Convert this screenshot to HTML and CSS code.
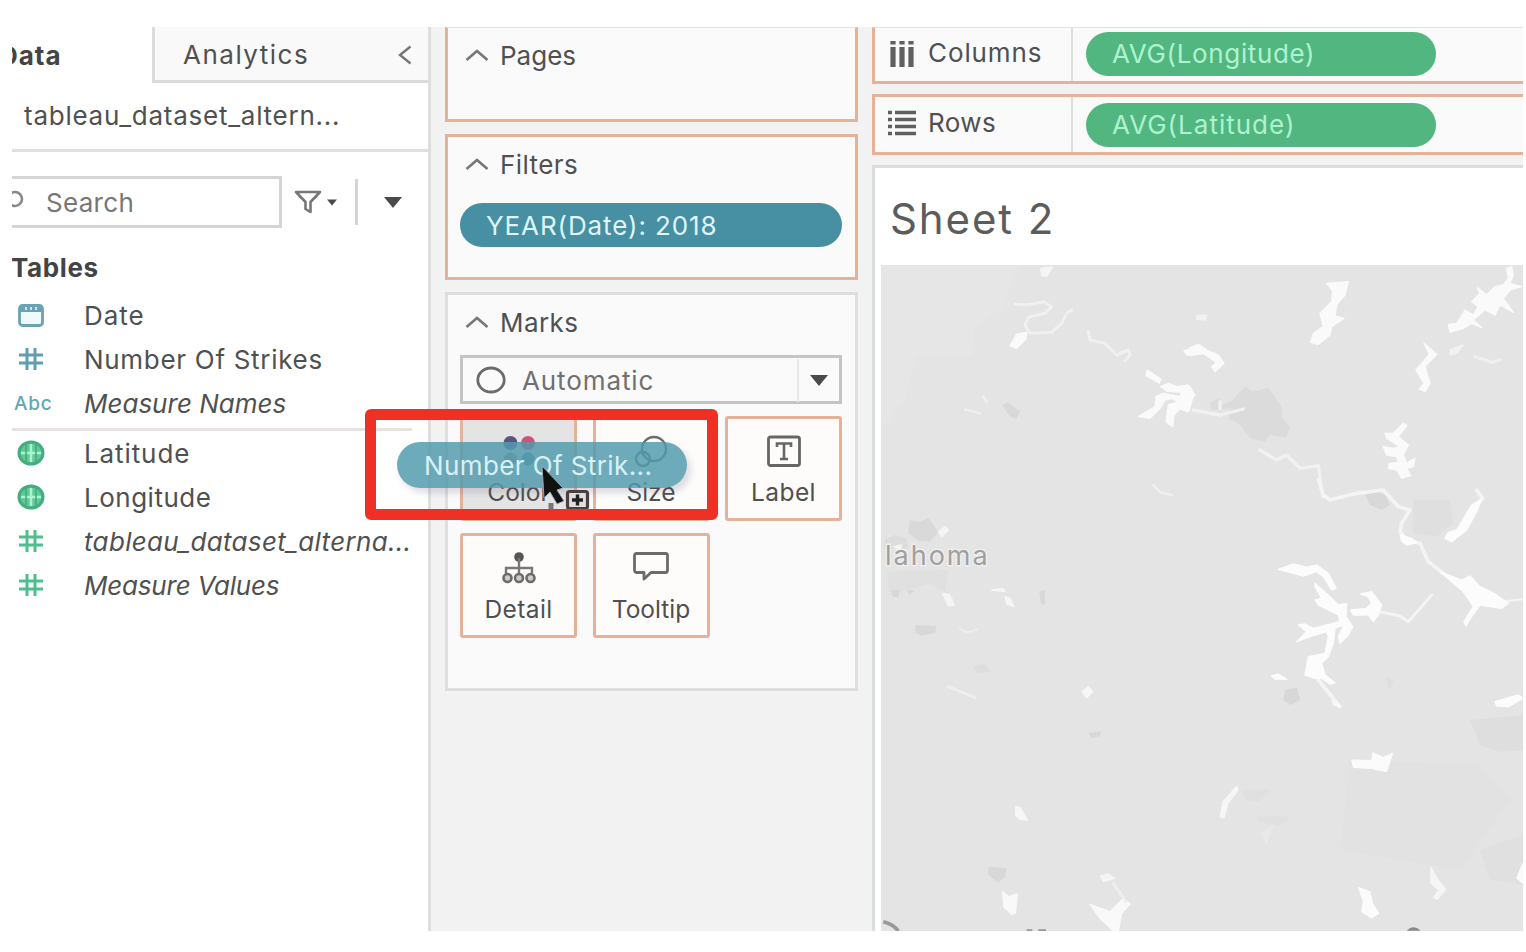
FILE: index.html
```
<!DOCTYPE html>
<html lang="en">
<head>
<meta charset="utf-8">
<title>Sheet 2</title>
<link rel="stylesheet" href="styles.css">
</head>
<body>
<svg class="defs" width="0" height="0" aria-hidden="true">
  <symbol id="hash" viewBox="0 0 24 24"><path d="M8 1V23M16 1V23M0 8H24M0 16H24" fill="none" stroke="currentColor" stroke-width="3"/></symbol>
  <symbol id="globe" viewBox="0 0 28 26"><ellipse cx="14" cy="13" rx="12" ry="11" fill="#62c799" stroke="#43ad7e" stroke-width="3"/><path d="M14 4V22M4 13H24" stroke="#a9f5d2" stroke-width="2.600" fill="none"/><path d="M9 4V22M19 4V22" stroke="#43ad7e" stroke-width="1.600" fill="none"/></symbol>
  <symbol id="up" viewBox="0 0 24 14"><path d="M1.500 12L12 3L22.500 12" fill="none" stroke="#777" stroke-width="2.600"/></symbol>
  <symbol id="down" viewBox="0 0 18 11"><path d="M0 0H18L9 11Z" fill="#4a4a4a"/></symbol>
</svg>
<div class="app">
  <aside class="data-pane">
    <div class="tabs">
      <div class="tab tab-active"><span class="t-data">Data</span></div>
      <div class="tab tab-analytics"><span class="t-analytics">Analytics</span>
        <svg width="14" height="20" viewBox="0 0 14 20"><path d="M12.500 1.500L2 10L12.500 18.500" fill="none" stroke="#777" stroke-width="2.400"/></svg></div>
    </div>
    <div class="source"><span class="t-source">tableau_dataset_altern...</span></div>
    <div class="search-row">
      <div class="search"><svg width="14" height="26" viewBox="0 0 14 26"><circle cx="3" cy="10" r="7" fill="none" stroke="#888" stroke-width="2.600"/></svg><span class="t-search">Search</span></div>
      <svg class="funnel" width="28" height="24" viewBox="0 0 28 24"><path d="M2 2H26L16.500 12V22L11.500 19V12Z" fill="none" stroke="#777" stroke-width="2.600" stroke-linejoin="round"/></svg>
      <svg class="mini-down" width="10" height="7"><use href="#down"/></svg>
      <i class="bar"></i>
      <svg class="menu-down" width="18" height="11"><use href="#down"/></svg>
    </div>
    <h2 class="tables"><span class="t-tables">Tables</span></h2>
    <ul class="fields">
      <li><svg class="dim" width="26" height="24" viewBox="0 0 26 24"><rect x="1.500" y="2.500" width="23" height="20" rx="3" fill="#eefafc" stroke="#6aa3b3" stroke-width="2.800"/><path d="M2 6H24" stroke="#6aa3b3" stroke-width="6"/><path d="M8 4V7M13 4V7M18 4V7" stroke="#d5eef3" stroke-width="1.800"/></svg><span class="t-date">Date</span></li>
      <li><svg class="dim" width="24" height="24"><use href="#hash"/></svg><span class="t-strikes">Number Of Strikes</span></li>
      <li><b class="abc">Abc</b><em class="t-names">Measure Names</em></li>
    </ul>
    <ul class="fields measures">
      <li><svg width="28" height="26"><use href="#globe"/></svg><span class="t-lat">Latitude</span></li>
      <li><svg width="28" height="26"><use href="#globe"/></svg><span class="t-lon">Longitude</span></li>
      <li><svg class="mea" width="24" height="24"><use href="#hash"/></svg><em class="t-alt">tableau_dataset_alterna...</em></li>
      <li><svg class="mea" width="24" height="24"><use href="#hash"/></svg><em class="t-values">Measure Values</em></li>
    </ul>
  </aside>

  <section class="cards">
    <div class="card pages"><h3><svg width="24" height="14"><use href="#up"/></svg><span class="t-pages">Pages</span></h3></div>
    <div class="card filters"><h3><svg width="24" height="14"><use href="#up"/></svg><span class="t-filters">Filters</span></h3>
      <div class="pill pill-teal"><span class="t-year">YEAR(Date): 2018</span></div></div>
    <div class="card marks"><h3><svg width="24" height="14"><use href="#up"/></svg><span class="t-marks">Marks</span></h3>
      <div class="select"><svg width="32" height="30" viewBox="0 0 32 30"><ellipse cx="16" cy="15" rx="13.200" ry="12" fill="none" stroke="#6b6b6b" stroke-width="2.800"/></svg><span class="t-auto">Automatic</span><i class="select-arrow"><svg width="18" height="11"><use href="#down"/></svg></i></div>
      <div class="mark-grid">
        <div class="mark mark-hot"><svg width="40" height="36" viewBox="0 0 40 36"><circle cx="11.500" cy="10" r="7" fill="#5b5583"/><circle cx="29" cy="10" r="7" fill="#cf5379"/><circle cx="11.500" cy="26" r="6.500" fill="#b08a7c"/><circle cx="29" cy="26" r="6.500" fill="#4c8ea8"/></svg><span class="t-color">Color</span></div>
        <div class="mark"><svg width="40" height="36" viewBox="0 0 40 36"><circle cx="23" cy="16" r="12" fill="none" stroke="#6b6b6b" stroke-width="2.400"/><circle cx="12" cy="26" r="7" fill="none" stroke="#6b6b6b" stroke-width="2.400"/></svg><span class="t-size">Size</span></div>
        <div class="mark"><svg width="40" height="36" viewBox="0 0 40 36"><rect x="4.500" y="4" width="31" height="28.500" rx="2" fill="none" stroke="#666" stroke-width="2.800"/><path d="M13 14V10.500H27V14M20 10.500V26M16 26H24" fill="none" stroke="#666" stroke-width="2.600"/></svg><span class="t-label">Label</span></div>
        <div class="mark"><svg width="40" height="36" viewBox="0 0 40 36"><circle cx="20" cy="7" r="4.800" fill="#555"/><path d="M20 8V25M7 25V18H33V25" fill="none" stroke="#777" stroke-width="2.400"/><g fill="#ccc" stroke="#6b6b6b" stroke-width="2.600"><circle cx="8.500" cy="28" r="4"/><circle cx="20" cy="28" r="4"/><circle cx="31.500" cy="28" r="4"/></g></svg><span class="t-detail">Detail</span></div>
        <div class="mark"><svg width="40" height="36" viewBox="0 0 40 36"><path d="M5.500 3.500H34.500Q36.500 3.500 36.500 5.500V20Q36.500 22.500 34.500 22.500H20L13 29V22.500H5.500Q3.500 22.500 3.500 20V5.500Q3.500 3.500 5.500 3.500Z" fill="none" stroke="#6b6b6b" stroke-width="2.800" stroke-linejoin="round"/></svg><span class="t-tooltip">Tooltip</span></div>
      </div>
    </div>
  </section>

  <main class="view">
    <div class="shelf shelf-cols"><div class="shelf-name"><svg width="28" height="28" viewBox="0 0 28 28"><path d="M5 1V4.500M14 1V4.500M23 1V4.500M5 7V27M14 7V27M23 7V27" stroke="#606060" stroke-width="5.200"/></svg><span class="t-cols">Columns</span></div><div class="pill pill-green"><span class="t-avglon">AVG(Longitude)</span></div></div>
    <div class="shelf shelf-rows"><div class="shelf-name"><svg width="28" height="28" viewBox="0 0 28 28"><path d="M0 2.500H4M0 9.500H4M0 16.500H4M0 23.500H4M7 2.500H28M7 9.500H28M7 16.500H28M7 23.500H28" stroke="#606060" stroke-width="3.600"/></svg><span class="t-rows">Rows</span></div><div class="pill pill-green"><span class="t-avglat">AVG(Latitude)</span></div></div>
    <div class="sheet">
      <h1><span class="t-sheet">Sheet 2</span></h1>
      <svg class="map" viewBox="881 265 642 666" preserveAspectRatio="none">
        <rect x="881" y="265" width="642" height="666" fill="#e4e4e4"/>
        <path d="M881 265H1020L1000 310L975 325L972 355L915 355L905 400L885 425H881Z" fill="#e6e6e6"/>
        <path d="M1470 720L1523 715V750L1500 752L1480 745Z" fill="#dedede"/>
        <path d="M1480 850L1523 835V885L1490 880Z" fill="#e0e0e0"/>
        <path d="M1350 760L1480 765L1510 800L1460 870L1340 850Z" fill="#e2e2e2"/>
        <g transform="translate(870 255) scale(.33333)" stroke-linejoin="round">
          <g fill="#d9d9d9"><path d="M397 450L415 442L430 455L450 468L440 492L420 485Z"/><path d="M120 795L150 800L175 788L190 810L205 830L180 860L145 858L115 835Z"/><path d="M45 855L75 840L110 850L115 880H40Z" opacity=".7"/><path d="M50 950L235 945L225 1010L180 985L60 1020Z" opacity=".4"/></g>
          <g fill="none" stroke="#f0f0f0" stroke-width="9" stroke-linecap="round"><path d="M435 147L470 150L520 140L545 155L525 175L475 187L465 210L480 235L545 232L575 205L590 175L605 165"/><path d="M655 230L660 255L705 265L740 300L775 285L780 300L765 318"/><path d="M850 690L870 712L905 720" stroke-width="7"/><path d="M285 463L330 475M340 425L350 440" stroke-width="7"/></g>
          <g fill="#fafafa" stroke="#fafafa" stroke-width="4"><path d="M512 40L548 36L530 65L515 62Z" opacity=".8"/><path d="M440 237L470 232L468 252L440 280L420 272Z"/><path d="M832 345L872 372L868 384L828 362Z"/><path d="M942 288L990 270V298L950 300Z"/><path d="M872 395L895 385L920 395L955 390L970 415L965 440L955 470L930 462L912 480L908 515L888 500L895 450L925 440L905 430L885 435L870 460L840 490L805 485L855 455L858 425L880 415L930 425L935 412L890 408Z"/><path d="M205 830L225 815L235 825L215 845ZM70 875L95 870L90 885Z" opacity=".8"/></g>
        </g>
        <g transform="translate(1190 255) scale(.33333)" stroke-linejoin="round">
          <path d="M60 440L90 430L95 450L125 438L165 395L190 410L235 398L275 455L275 490L300 515L288 548L240 540L225 560L180 550L150 510L115 490L125 460L65 465Z" fill="#dbdbdb"/>
          <g fill="#fafafa" stroke="#fafafa" stroke-width="4"><path d="M410 85L475 80L465 120L440 150L435 182L462 190L425 215L420 240L385 268L362 262L370 235L400 215L390 175L425 140L428 108Z"/><path d="M775 208L800 205L825 165L850 180L865 155L845 140L870 115L862 98L890 120L915 95L940 90L955 70L950 40L965 35L970 60L960 85L995 95L960 105L940 130L970 172L930 150L915 180L885 165L850 195L875 218L845 205L820 220L780 232Z"/><path d="M0 278L25 268L50 285L85 300L102 325L75 350L65 335L80 322L40 295L0 302Z"/><path d="M0 395L15 420L0 438Z"/><path d="M20 182L50 180L45 195L20 193Z" opacity=".6"/><path d="M702 265L740 298L705 335L720 385L705 410L688 402L702 385L678 345L700 320L718 297Z"/><path d="M780 285L820 270L800 295L780 300Z" opacity=".6"/><path d="M640 505L650 512L625 545L655 570L640 600L650 625L675 610L670 635L650 640L662 662L635 670L620 645L595 640L598 625L625 622L620 605L590 600L580 575L610 580L630 575L590 550L585 535L610 535Z"/></g>
          <g fill="none" stroke="#f1f1f1" stroke-width="10" stroke-linecap="round"><path d="M10 465L90 480L160 462M90 440V460"/><path d="M210 585L260 615L290 600L330 640L385 632L398 725"/><path d="M855 305L905 322L930 315" opacity=".8"/></g>
        </g>
        <g transform="translate(1190 480) scale(.33333)" stroke-linejoin="round">
          <g fill="#d8d8d8"><path d="M525 45L560 35L585 45L600 75L575 90L540 75Z"/><path d="M670 60L780 60L790 130L740 170L670 160Z" opacity=".35"/><path d="M285 630L320 622L330 660L300 675L280 660Z"/><path d="M585 590L610 600L600 630Z" opacity=".4"/></g>
          <g fill="none" stroke="#f4f4f4" stroke-width="11" stroke-linecap="round"><path d="M385 0L400 45L420 60L500 40L580 30L625 80L660 90L635 130L630 155L650 180L690 190L715 245L760 280"/><path d="M570 395L630 408L655 425L725 345" stroke-width="9"/><path d="M385 600L450 680" /><path d="M860 30L878 55L840 95" /><path d="M940 365L995 358" stroke-width="7"/></g>
          <g fill="#fcfcfc" stroke="#fcfcfc" stroke-width="4"><path d="M775 157L800 150L845 75L875 58L860 95L830 150L785 185L765 175Z"/><path d="M630 165L665 175L680 188L650 195L635 183Z"/><path d="M750 275L815 300L840 288L870 320L912 340L955 370L935 385L870 375L845 410L828 438L822 425L850 380L820 335Z"/><path d="M265 268L310 252L350 262L380 255L415 280L438 325L425 330L400 290L380 275L340 288Z"/><path d="M375 310L420 350L445 375L470 370L468 410L488 440L475 465L450 490L445 470L462 435L435 445L430 490L415 530L395 550L405 585L435 608L420 612L395 595L375 595L345 585L355 530L405 520L415 470L410 455L360 470L320 485L350 455L325 435L345 432L370 445L450 425L445 405L385 375L375 360L395 355L375 320Z"/><path d="M482 390L530 385L545 370L535 350L512 342L545 335L575 375L565 405L550 425L535 405L490 405Z"/><path d="M245 588L265 582L290 598L255 597ZM915 665L985 645L998 655L955 680L920 678Z"/></g>
        </g>
        <g transform="translate(870 590) scale(.33333)" stroke-linejoin="round">
          <g fill="#d8d8d8"><path d="M135 105L200 108L195 128L155 138L137 128Z"/><path d="M65 0H90L85 22L68 20ZM110 0H135L120 15ZM508 5L525 0V45L512 40Z"/><path d="M310 230L345 222L362 245L320 250Z" opacity=".5"/><path d="M355 830L410 835L405 860L385 878L355 855ZM655 428L695 424L690 438L665 445Z"/></g>
          <g fill="#f9f9f9" stroke="#f9f9f9" stroke-width="4"><path d="M218 10L240 15L253 45L235 48ZM405 20L420 25L432 50L410 42ZM365 0L400 -5L405 5Z" opacity=".85"/><path d="M636 305L655 290L668 305L650 323ZM437 650L450 652L472 690L450 688L437 675Z" opacity=".9"/><path d="M398 905L415 920L442 912L436 970L425 973L402 950Z"/><path d="M692 858L715 852L735 865L700 875Z" opacity=".8"/><path d="M660 943L720 965L760 925L780 942L755 970L745 1023H730L690 985Z"/></g>
          <g fill="none" stroke="#eee" stroke-width="9" stroke-linecap="round"><path d="M235 290L315 323"/><path d="M730 880L768 935"/><path d="M270 115Q290 135 320 118" stroke-width="6"/></g>
          <path d="M40 995Q70 1002 85 1023" fill="none" stroke="#999" stroke-width="11"/><path d="M470 1021H487M505 1021H528" stroke="#999" stroke-width="7"/>
        </g>
        <g transform="translate(1190 700) scale(.33333)" stroke-linejoin="round">
          <g fill="#fbfbfb" stroke="#fbfbfb" stroke-width="3"><path d="M485 180L545 182L548 158L580 172L608 160L590 215L545 206L490 202Z"/><path d="M505 562L540 575L548 610L567 640L545 655L515 635L520 605Z"/><path d="M722 500L745 540L768 568L742 600L730 592L745 570L722 550Z" opacity=".75"/><path d="M140 258L145 270L115 310L102 355L90 352L98 305Z" opacity=".8"/><path d="M998 490V550L980 535Z"/><path d="M425 0L445 10L450 22L430 15Z" opacity=".8"/><path d="M215 400L250 375L230 430Z" opacity=".25"/></g>
          <path d="M650 692Q670 672 692 692Z" fill="#888"/><path d="M155 270L245 268L205 305L165 300ZM200 350H300L270 378L210 365Z" fill="#dcdcdc" opacity=".5"/>
        </g>
        <text x="885" y="565" class="map-label">lahoma</text>
      </svg>
    </div>
  </main>
  <div class="drag-pill"><span class="t-drag">Number Of Strik...</span></div>
  <svg class="cursor" width="54" height="52" viewBox="0 0 54 52"><path d="M10 38V50" stroke="#777" stroke-width="5"/><rect x="26.500" y="26.500" width="20" height="17" rx="2" fill="#e2dcdc" stroke="#4b4040" stroke-width="3.200"/><path d="M36.500 29.500V40.500M31 35H42" stroke="#222" stroke-width="3.400"/><path d="M1 1L22 23L16 25L23 36L16 39L9 27L3 33Z" fill="#111" stroke="#9ab" stroke-width="1"/></svg>
  <div class="callout"></div>
</div>
</body>
</html>
```

FILE: styles.css
```
* { box-sizing: border-box; }
body { margin: 0; background: #fff; font-family: Inter, "Liberation Sans", sans-serif; font-size: 26px; color: #505050; overflow: hidden; }
h1, h2, h3, ul { margin: 0; padding: 0; font-weight: 400; }
h2, h3 { font-size: 26px; }
svg { display: block; flex: none; }
.defs { position: absolute; }
span, em { white-space: nowrap; }
.app { position: relative; display: flex; width: 1511px; height: 904px; margin: 27px 0 0 12px; overflow: hidden; background: #f2f2f2; }

.data-pane { flex: none; width: 419px; background: #fff; border-right: 3px solid #dedede; overflow: hidden; }
.tabs { display: flex; height: 56px; }
.tab { display: flex; align-items: center; }
.tab-active { width: 140px; justify-content: flex-start; font-weight: 700; color: #444; }
.tab-active span { margin-left: -13px; }
.tab-analytics { flex: 1; justify-content: space-between; padding: 2px 16px 0 28px; background: #f9f9f9; border-left: 3px solid #dcdcdc; border-bottom: 3px solid #dcdcdc; }
.source { height: 69px; padding: 0 12px 2px; border-bottom: 3px solid #e0e0e0; display: flex; align-items: center; }
.search-row { display: flex; align-items: center; height: 52px; margin-top: 24px; }
.search { display: flex; align-items: center; gap: 20px; width: 270px; height: 52px; border: 3px solid #d5d5d5; border-left: 0; color: #777; }
.funnel { margin-left: 12px; }
.mini-down { margin-left: 5px; }
.bar { width: 3px; height: 46px; margin-left: 18px; background: #d5d5d5; }
.menu-down { margin-left: 26px; }
.tables { display: flex; align-items: center; height: 40px; margin-top: 19px; font-weight: 700; color: #444; }
.tables span { margin-left: -1px; }
.fields { list-style: none; width: 400px; padding-top: 6px; }
.fields li { display: grid; grid-template-columns: 38px 1fr; column-gap: 34px; align-items: center; height: 44px; }
.fields li svg { justify-self: center; }
.dim { color: #5f9fb1; }
.mea { color: #4fc08d; }
.abc { font-size: 19px; font-weight: 500; letter-spacing: .8px; padding-left: 2px; color: #63a6b6; }
.measures { border-top: 3px solid #e6e2e2; margin-top: 3px; padding-top: 0; }

.cards { flex: none; width: 441px; padding-left: 14px; display: flex; flex-direction: column; gap: 12px; }
.card { width: 413px; background: #fafafa; border: 3px solid #e4b199; padding: 0 12px; }
.card h3 { display: flex; align-items: center; gap: 11px; height: 54px; padding-left: 5px; }
.pages { height: 95px; border-top: 1px solid #f6dccb; }
.filters { height: 146px; }
.marks { height: 399px; border-color: #dedede; }
.pill { display: flex; align-items: center; border-radius: 22px; height: 44px; }
.pill-teal { background: #478fa2; color: #dff5fa; padding-left: 26px; margin-top: 12px; width: 382px; }
.select { display: flex; align-items: center; height: 49px; width: 382px; margin-top: 6px; border: 3px solid #c4c4c4; padding: 1px 0 0 12px; gap: 15px; color: #707070; }
.select-arrow { display: flex; align-items: center; justify-content: center; margin-left: auto; width: 42px; height: 43px; border-left: 2px solid #e8e8e8; }
.mark-grid { display: grid; grid-template-columns: repeat(3, 117px); gap: 12px 15.5px; margin-top: 12px; }
.mark { display: flex; flex-direction: column; align-items: center; height: 105px; padding-top: 14px; gap: 9px; background: #fdfcfb; border: 3px solid #e4b199; border-radius: 3px; font-size: 24.5px; }
.mark-hot { background: #e4e4e4; }
.mark span { line-height: 28px; }

.view { flex: 1; display: flex; flex-direction: column; min-width: 0; }
.shelf { display: flex; align-items: center; background: #fafafa; border: 3px solid #e4b199; border-right: 0; }
.shelf-cols { height: 57px; border-top: 1px solid #f6dccb; }
.shelf-cols .t-cols { margin-top: -3px; }
.shelf-rows { height: 61px; margin-top: 10px; }
.shelf-rows .t-rows { margin-top: -2px; }
.shelf-name { display: flex; align-items: center; gap: 12px; width: 198px; height: 100%; padding: 0 0 2px 13px; border-right: 2px solid #dedede; }
.pill-green { width: 350px; margin-left: 13px; padding-left: 26px; background: #51b67f; color: #aef3d0; }
.shelf-cols .pill { margin-top: -2px; }
.sheet { flex: 1; margin-top: 10px; padding-left: 6px; background: #fff; border: 3px solid #d9dddd; border-right: 0; border-bottom: 0; display: flex; flex-direction: column; }
.sheet h1 { display: flex; align-items: center; height: 97px; padding: 4px 0 0 9px; font-size: 42px; color: #5c5c5c; }
.map { width: 642px; height: 666px; }
.map-label { font-size: 27px; letter-spacing: 2px; fill: #a0a0a0; stroke: #eee; stroke-width: 3px; paint-order: stroke; }

.t-data { letter-spacing: 1px; }
.t-analytics { letter-spacing: 1.5px; }
.t-source { letter-spacing: .75px; }
.t-search { letter-spacing: .3px; }
.t-tables { letter-spacing: .6px; }
.t-date, .t-avglat { letter-spacing: 1px; }
.t-strikes { letter-spacing: .7px; }
.t-lat { letter-spacing: .9px; }
.t-lon { letter-spacing: .5px; }
.t-alt { letter-spacing: .33px; }
.t-values { letter-spacing: -.2px; }
.t-filters, .t-marks, .t-rows, .t-label, .t-detail { letter-spacing: .4px; }
.t-year, .t-auto, .t-cols { letter-spacing: .9px; }
.t-avglon { letter-spacing: .65px; }
.t-sheet { letter-spacing: 1.9px; }
.t-drag { letter-spacing: .4px; }

.drag-pill { position: absolute; left: 385px; top: 415px; width: 290px; height: 46px; border-radius: 23px; padding-left: 27px; display: flex; align-items: center; background: rgba(82, 155, 173, .84); color: #d9f1f6; box-shadow: 4px 5px 6px rgba(80, 80, 110, .18); }
.cursor { position: absolute; left: 529px; top: 438px; }
.callout { position: absolute; left: 353px; top: 382px; width: 353px; height: 111px; border: 11px solid #ee3124; border-radius: 6px; }
```
